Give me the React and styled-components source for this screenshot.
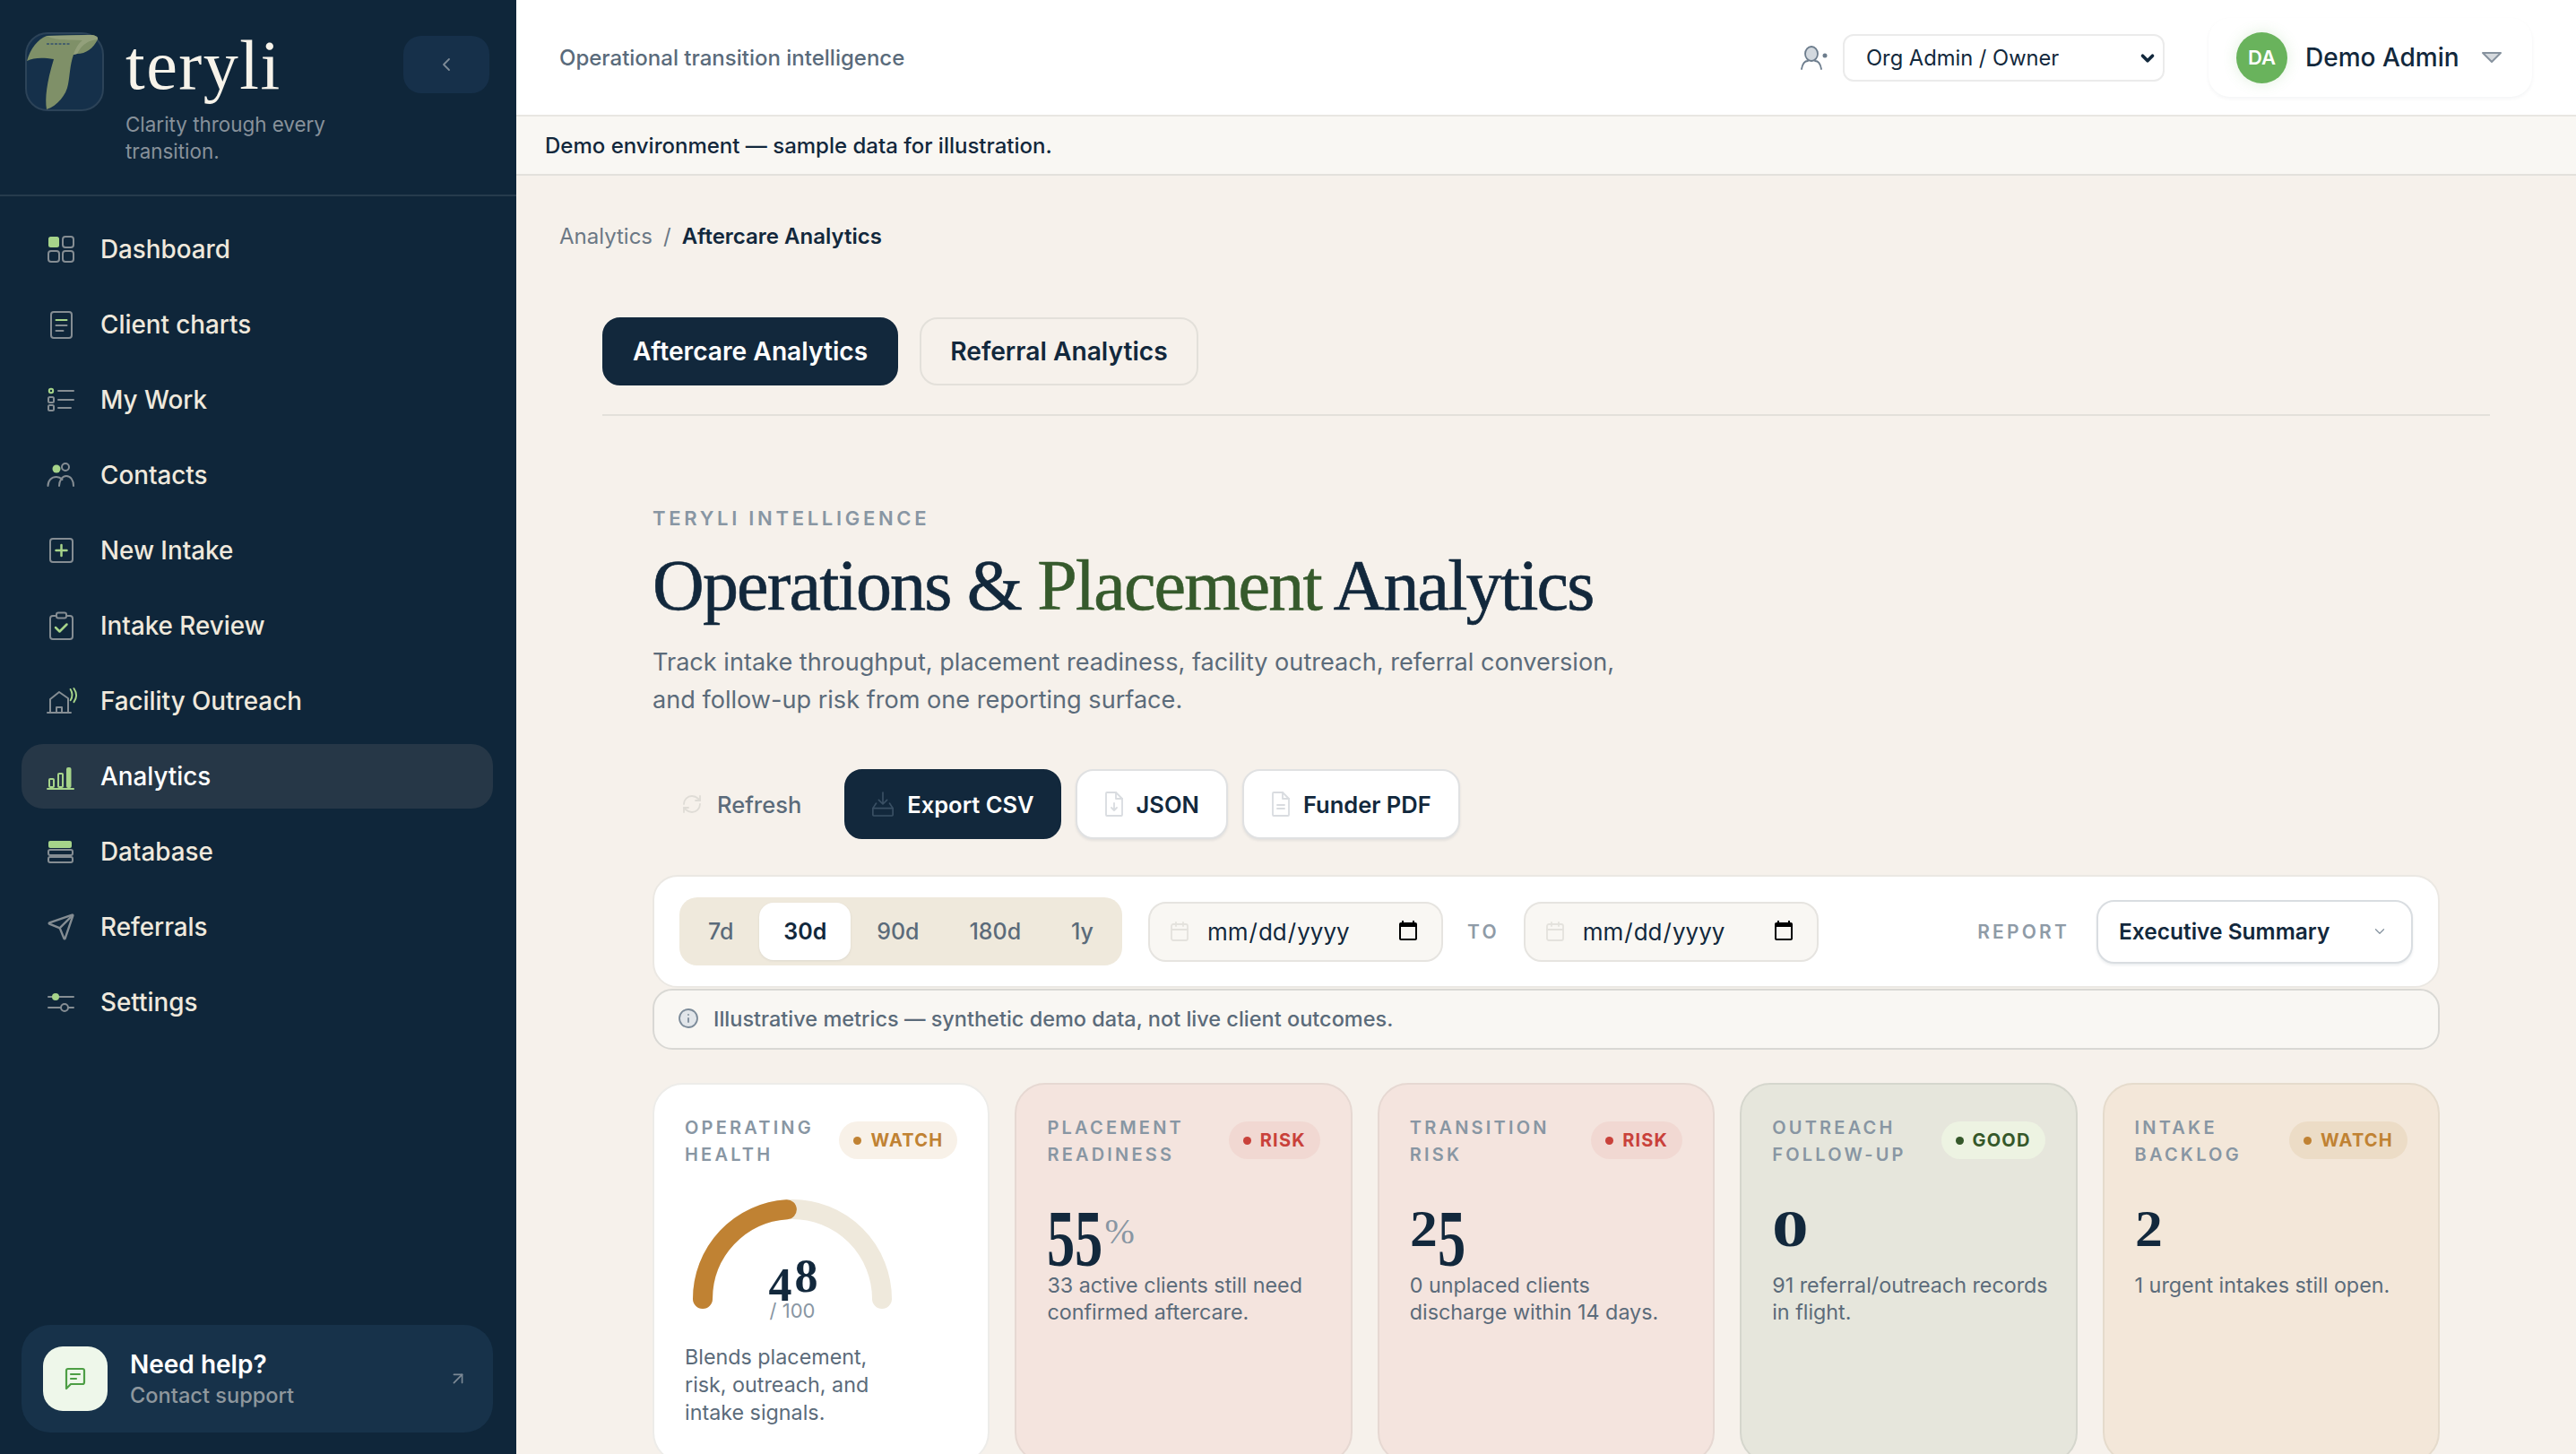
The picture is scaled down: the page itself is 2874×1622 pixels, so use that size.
import React from "react";
import styled, { createGlobalStyle } from "styled-components";
import { ChevronLeft, ChevronDown, Info, ArrowUpRight, Send, Calendar, RefreshCw } from "lucide-react";

const GREEN = "#a6d48a";
const GRAY = "#858d93";

const GlobalStyle = createGlobalStyle`
  html, body {
    margin: 0;
    height: 100%;
    overflow: hidden;
    background: #f6f1eb;
    font-family: Inter, "Liberation Sans", sans-serif;
    color: #12283c;
  }
  * { box-sizing: border-box; }
`;

const Page = styled.div`
  display: flex;
  height: 100vh;
  overflow: hidden;
`;

const Sidebar = styled.aside`
  width: 576px;
  flex-shrink: 0;
  background: #0f263a;
  display: flex;
  flex-direction: column;
  padding-bottom: 24px;
`;

const Brand = styled.div`
  height: 219px;
  padding: 36px 30px 0 28px;
  border-bottom: 2px solid #263b4d;
  display: flex;
  align-items: flex-start;
  gap: 24px;
`;

const BrandText = styled.div`
  flex: 1;
`;

const Wordmark = styled.div`
  font-family: "Liberation Serif", serif;
  font-size: 78px;
  line-height: 76px;
  letter-spacing: 1.5px;
  color: #f7f3ea;
  margin-top: -1px;
`;

const Tagline = styled.div`
  font-size: 22.4px;
  line-height: 30px;
  color: #87919a;
  width: 250px;
  margin-top: 13px;
`;

const CollapseButton = styled.button`
  width: 96px;
  height: 64px;
  margin-top: 4px;
  border: none;
  border-radius: 20px;
  background: #16304a;
  color: #7e8b97;
  display: flex;
  align-items: center;
  justify-content: center;
`;

const Nav = styled.nav`
  display: flex;
  flex-direction: column;
  gap: 12px;
  padding: 23px 26px 0 24px;
`;

const NavItem = styled.a`
  height: 72px;
  border-radius: 24px;
  padding-left: 28px;
  display: flex;
  align-items: center;
  gap: 28px;
  font-size: 27.8px;
  font-weight: 500;
  color: ${(p) => (p.$active ? "#ffffff" : "#efe9dd")};
  background: ${(p) => (p.$active ? "#263747" : "transparent")};
`;

const NavIcon = styled.span`
  width: 32px;
  height: 32px;
  flex-shrink: 0;
  display: block;

  svg {
    display: block;
    overflow: visible;
  }
`;

const HelpCard = styled.div`
  margin: auto 26px 0 24px;
  height: 120px;
  border-radius: 32px;
  background: #17324a;
  display: flex;
  align-items: center;
  padding: 0 28px 0 24px;
  gap: 25px;
`;

const HelpIcon = styled.div`
  width: 72px;
  height: 72px;
  border-radius: 22px;
  background: #eef7ea;
  display: flex;
  align-items: center;
  justify-content: center;
`;

const HelpText = styled.div`
  flex: 1;
  padding-top: 2px;
`;

const HelpTitle = styled.div`
  font-size: 28px;
  line-height: 36px;
  font-weight: 600;
  color: #ffffff;
`;

const HelpSub = styled.div`
  font-size: 23.6px;
  line-height: 34px;
  font-weight: 500;
  color: #8e979d;
`;

const Main = styled.main`
  flex: 1;
  min-width: 0;
  display: flex;
  flex-direction: column;
`;

const Header = styled.header`
  height: 130px;
  flex-shrink: 0;
  background: #ffffff;
  border-bottom: 2px solid #e8e6e2;
  padding: 0 49px 0 48px;
  display: flex;
  align-items: center;
  justify-content: space-between;
`;

const HeaderTitle = styled.div`
  font-size: 24px;
  font-weight: 500;
  color: #5a6b7b;
`;

const HeaderRight = styled.div`
  display: flex;
  align-items: center;
`;

const RoleSelectWrap = styled.div`
  position: relative;
  margin-left: 16px;
  margin-right: 49px;

  svg {
    position: absolute;
    right: 8px;
    top: 16px;
    color: #12283c;
    pointer-events: none;
  }
`;

const RoleSelect = styled.select`
  appearance: none;
  display: block;
  width: 359px;
  height: 53px;
  border: 2px solid #ebebeb;
  border-radius: 12px;
  background: #ffffff;
  padding-left: 24px;
  font: 400 23.7px Inter, sans-serif;
  color: #12283c;
`;

const UserChip = styled.div`
  width: 361px;
  height: 88px;
  border-radius: 24px;
  background: #ffffff;
  box-shadow: 0 2px 4px rgba(18, 40, 60, 0.05);
  padding-left: 31px;
  display: flex;
  align-items: center;
`;

const Avatar = styled.div`
  width: 57px;
  height: 57px;
  border-radius: 50%;
  background: #69b35c;
  color: #ffffff;
  font-size: 22px;
  font-weight: 600;
  display: flex;
  align-items: center;
  justify-content: center;
  box-shadow: 0 0 16px rgba(105, 179, 92, 0.2);
`;

const UserName = styled.div`
  font-size: 28px;
  font-weight: 500;
  margin: 0 24px 0 20px;
`;

const Banner = styled.div`
  height: 66px;
  flex-shrink: 0;
  background: #f9f7f3;
  border-bottom: 2px solid #e3e1dc;
  padding-left: 32px;
  display: flex;
  align-items: center;
  font-size: 24px;
  font-weight: 500;
  color: #12283c;
`;

const Content = styled.div`
  flex: 1;
  overflow: hidden;
  padding: 51px 96px 0 48px;
`;

const Crumbs = styled.div`
  font-size: 24px;
  line-height: 34px;
  color: #6b7885;
  display: flex;
  gap: 12px;
`;

const CrumbCurrent = styled.span`
  color: #12283c;
  font-weight: 600;
`;

const Tabs = styled.div`
  margin: 73px 0 0 48px;
  padding-bottom: 32px;
  border-bottom: 2px solid #e3e0da;
  display: flex;
  gap: 24px;
`;

const Tab = styled.button`
  height: 76px;
  padding: 0 32px;
  border-radius: 20px;
  border: 2px solid ${(p) => (p.$active ? "#12283c" : "#e3e0da")};
  background: ${(p) => (p.$active ? "#12283c" : "transparent")};
  color: ${(p) => (p.$active ? "#ffffff" : "#12283c")};
  font: 600 28.2px Inter, sans-serif;
`;

const Section = styled.section`
  margin-left: 48px;
  padding: 0 56px;
`;

const Eyebrow = styled.div`
  margin-top: 99px;
  font-size: 22px;
  line-height: 30px;
  font-weight: 600;
  letter-spacing: 3.7px;
  color: #8896a3;
`;

const Title = styled.h1`
  margin: 16px 0 0;
  font-family: "Liberation Serif", serif;
  font-size: 80px;
  line-height: 88px;
  font-weight: 400;
  letter-spacing: -1.85px;
  -webkit-text-stroke: 0.6px currentColor;
  color: #12283c;
  white-space: nowrap;
`;

const TitleAccent = styled.span`
  color: #365a2c;
`;

const Subtitle = styled.p`
  margin: 21px 0 0;
  max-width: 1100px;
  font-size: 27.1px;
  line-height: 42px;
  color: #5b6b7a;
`;

const Actions = styled.div`
  margin-top: 56px;
  display: flex;
  gap: 16px;
`;

const ActionButton = styled.button`
  height: 78px;
  padding: 0 ${(p) => (p.$kind === "primary" ? 28 : 30)}px;
  border-radius: 20px;
  display: flex;
  align-items: center;
  gap: ${(p) => (p.$kind === "ghost" ? 16 : 14)}px;
  font: 600 25.5px Inter, sans-serif;
  border: 2px solid transparent;
  ${(p) =>
    p.$kind === "primary" &&
    "background:#12283c;color:#fff;border-color:#12283c;"}
  ${(p) =>
    p.$kind === "ghost" &&
    "background:transparent;color:#5b6b7a;font-weight:500;"}
  ${(p) =>
    p.$kind === "outline" &&
    "background:#fff;color:#12283c;border-color:#e0e1e2;box-shadow:0 2px 3px rgba(18,40,60,.08);"}
`;

const FilterCard = styled.div`
  margin-top: 40px;
  height: 126px;
  background: #ffffff;
  border: 2px solid #ebe8e3;
  border-radius: 28px;
  padding: 0 28px;
  display: flex;
  align-items: center;
`;

const Segments = styled.div`
  width: 494px;
  height: 76px;
  border-radius: 20px;
  background: #efe9dc;
  padding: 5px;
  display: flex;
  justify-content: space-between;
  align-items: center;
`;

const Segment = styled.button`
  height: 64px;
  border: none;
  border-radius: 16px;
  padding: 0 27px;
  font: ${(p) => (p.$active ? 600 : 500)} 25px Inter, sans-serif;
  color: ${(p) => (p.$active ? "#12283c" : "#5b6b7a")};
  background: ${(p) => (p.$active ? "#ffffff" : "transparent")};
  box-shadow: ${(p) => (p.$active ? "0 1px 3px rgba(18,40,60,.08)" : "none")};
`;

const DateField = styled.label`
  width: 329px;
  height: 67px;
  margin-left: ${(p) => p.$ml}px;
  border: 2px solid #e6e4e0;
  border-radius: 20px;
  background: #f9f7f3;
  padding: 0 24px 0 21px;
  display: flex;
  align-items: center;
  gap: 18px;
  color: #e4e2dd;
  flex-shrink: 0;
`;

const DateInput = styled.input`
  flex: 1;
  min-width: 0;
  border: none;
  outline: none;
  background: transparent;
  font: 400 26px Inter, sans-serif;
  color: #12283c;
  padding: 0;

  &::-webkit-calendar-picker-indicator {
    width: 26px;
    height: 26px;
    padding: 0;
    margin: 0;
    opacity: 1;
  }
`;

const SmallCaps = styled.span`
  font-size: 21px;
  font-weight: 600;
  letter-spacing: 3.2px;
  color: #8f9ba7;
`;

const ToLabel = styled(SmallCaps)`
  margin-left: 27px;
  margin-right: 27px;
`;

const ReportLabel = styled(SmallCaps)`
  margin-left: auto;
  margin-right: 30px;
`;

const ReportSelect = styled.div`
  width: 353px;
  height: 71px;
  border: 2px solid #d9dde1;
  border-radius: 20px;
  background: #ffffff;
  box-shadow: 0 2px 3px rgba(18, 40, 60, 0.08);
  padding: 0 26px 0 23px;
  display: flex;
  align-items: center;
  justify-content: space-between;
  font-size: 24.5px;
  font-weight: 600;
  color: #8a97a3;
  flex-shrink: 0;
`;

const ReportValue = styled.span`
  color: #12283c;
`;

const Notice = styled.div`
  margin-top: 1px;
  height: 68px;
  background: #f9f7f3;
  border: 2px solid #d9d8d4;
  border-radius: 22px;
  padding: 0 0 2px 26px;
  display: flex;
  align-items: center;
  gap: 16px;
  font-size: 23.5px;
  font-weight: 500;
  color: #5b6b7a;

  svg {
    color: #7c8b99;
    fill: #e2e6ea;
  }
`;

const Metrics = styled.div`
  margin-top: 37px;
  display: grid;
  grid-template-columns: repeat(5, minmax(0, 1fr));
  gap: 28px;
`;

const CARD_TONES = {
  neutral: { bg: "#ffffff", border: "#edece9" },
  risk: { bg: "#f4e4de", border: "#e6d8d2" },
  good: { bg: "#e6e6dc", border: "#d5d6cd" },
  watch: { bg: "#f3e7d9", border: "#e5dbcc" },
};

const Card = styled.article`
  height: 424px;
  padding: 33px 34px 0 34px;
  border-radius: 34px;
  background: ${(p) => CARD_TONES[p.$tone].bg};
  border: 2px solid ${(p) => CARD_TONES[p.$tone].border};
`;

const CardHead = styled.div`
  display: flex;
  align-items: flex-start;
  justify-content: space-between;
`;

const CardLabel = styled.div`
  font-size: 20px;
  line-height: 30px;
  font-weight: 600;
  letter-spacing: 3.2px;
  color: #8896a3;
`;

const BADGES = {
  "watch-light": { bg: "#f8f1e8", fg: "#c08233" },
  "watch-dark": { bg: "#ecdcc6", fg: "#c08233" },
  risk: { bg: "#f1d8d2", fg: "#c9413a" },
  good: { bg: "#edf3e2", fg: "#35582a" },
};

const Badge = styled.span`
  height: 42px;
  margin-top: 8px;
  padding: 0 16px;
  border-radius: 21px;
  display: inline-flex;
  align-items: center;
  gap: 10px;
  font-size: 20px;
  font-weight: 700;
  letter-spacing: 1.2px;
  background: ${(p) => BADGES[p.$tone].bg};
  color: ${(p) => BADGES[p.$tone].fg};

  &::before {
    content: "";
    width: 9px;
    height: 9px;
    border-radius: 50%;
    background: currentColor;
  }
`;

const Gauge = styled.div`
  position: relative;
  width: 222px;
  height: 160px;
  margin: 35px 0 0 9px;
`;

const GaugeScore = styled.div`
  position: absolute;
  top: 60px;
  left: 0;
  right: 0;
  text-align: center;
  font-family: "Liberation Serif", serif;
  font-size: 52px;
  line-height: 52px;
`;

const GaugeMax = styled.div`
  position: absolute;
  top: 112px;
  left: 0;
  right: 0;
  text-align: center;
  font-size: 22px;
  line-height: 24px;
  color: #8896a3;
`;

const Value = styled.div`
  height: 76px;
  margin-top: 40px;
  font-family: "Liberation Serif", serif;
  font-size: 56px;
  line-height: 56px;
  color: #12283c;
  white-space: nowrap;
`;

const Digit = styled.span`
  display: inline-block;
  width: ${(p) => p.$w}px;
  font-size: ${(p) => p.$size}px;
  font-weight: 700;
  line-height: 0;
  vertical-align: ${(p) => p.$drop}px;
  transform: scaleX(${(p) => p.$sx});
  transform-origin: left center;
`;

const Percent = styled.span`
  display: inline-block;
  font-size: 40px;
  line-height: 0;
  vertical-align: 3px;
  color: #8896a3;
  margin-left: 2px;
`;

const CardText = styled.p`
  margin: 0;
  font-size: 23.3px;
  line-height: 30px;
  color: #5b6b7a;
  white-space: nowrap;
`;

const GaugeText = styled(CardText)`
  line-height: 31px;
`;

const DIGIT_SHAPES = {
  0: { $size: 56, $w: 39, $sx: 1.45, $drop: 0 },
  2: { $size: 56, $w: 31, $sx: 1.1, $drop: 0 },
  5: { $size: 88, $w: 31, $sx: 0.71, $drop: -21 },
  4: { $size: 52, $w: 31, $sx: 1, $drop: -10 },
  8: { $size: 52, $w: 27, $sx: 1, $drop: 0 },
};

function OldStyle({ value }) {
  return String(value)
    .split("")
    .map((d, i) => (
      <Digit key={i} {...DIGIT_SHAPES[d]}>
        {d}
      </Digit>
    ));
}

const Icon = ({ children, w = 32, h = 32 }) => (
  <svg width={w} height={h} viewBox={`0 0 ${w} ${h}`} fill="none" stroke={GRAY} strokeWidth="2" strokeLinecap="round" strokeLinejoin="round">
    {children}
  </svg>
);

const NAV = [
  {
    label: "Dashboard",
    icon: (
      <Icon>
        <rect x="2" y="2" width="12" height="12" rx="2.5" fill={GREEN} stroke="none" />
        <rect x="18" y="2" width="12" height="12" rx="3" />
        <rect x="2" y="18" width="12" height="12" rx="3" />
        <rect x="18" y="18" width="12" height="12" rx="3" />
      </Icon>
    ),
  },
  {
    label: "Client charts",
    icon: (
      <Icon>
        <rect x="5" y="2" width="23" height="29" rx="3" />
        <path d="M10.5 11h12" stroke={GREEN} />
        <path d="M10.5 17h12M10.5 23h8" />
      </Icon>
    ),
  },
  {
    label: "My Work",
    icon: (
      <Icon>
        <circle cx="5" cy="6" r="2.2" stroke={GREEN} />
        <rect x="2" y="13" width="6" height="6" rx="1.5" />
        <rect x="2" y="22" width="6" height="6" rx="1.5" />
        <path d="M13 6h17M13 16h17M13 25h14" />
      </Icon>
    ),
  },
  {
    label: "Contacts",
    icon: (
      <Icon>
        <circle cx="11" cy="9" r="4.5" fill={GREEN} stroke="none" />
        <circle cx="21" cy="7" r="4" />
        <path d="M1.5 28c0-6 4-10 9.5-10 3.5 0 5 1.5 6.5 3M14 28c0-5 3-11 8-11s8 5 8 11" />
      </Icon>
    ),
  },
  {
    label: "New Intake",
    icon: (
      <Icon>
        <rect x="4" y="3" width="25" height="26" rx="3" />
        <path d="M16.5 10v12M10.5 16h12" stroke={GREEN} strokeWidth="2.5" />
      </Icon>
    ),
  },
  {
    label: "Intake Review",
    icon: (
      <Icon>
        <rect x="4" y="5" width="25" height="26" rx="3" />
        <rect x="11" y="1.5" width="11" height="6" rx="2" fill="#0f263a" />
        <path d="M10 18l4.5 4.5 8-8" stroke={GREEN} strokeWidth="2.5" />
      </Icon>
    ),
  },
  {
    label: "Facility Outreach",
    icon: (
      <Icon>
        <path d="M4 28V14L14 6l10 7v15M1 29h26" />
        <path d="M11 29v-6h6v6" />
        <path d="M28 2c2.5 4 2.5 9 0 13M32 1c3.5 5 3.5 11 0 16" stroke={GREEN} transform="translate(0 1) scale(.95)" />
      </Icon>
    ),
  },
  {
    label: "Analytics",
    active: true,
    icon: (
      <Icon>
        <g stroke={GREEN}>
          <rect x="3" y="19" width="5" height="9" rx="1" />
          <rect x="13" y="13" width="5" height="15" rx="1" />
          <rect x="23" y="7" width="3.5" height="21" rx="1" fill={GREEN} />
          <path d="M1 30h29" />
        </g>
      </Icon>
    ),
  },
  {
    label: "Database",
    icon: (
      <Icon>
        <rect x="2" y="4" width="26" height="8" rx="2" fill={GREEN} stroke="none" />
        <rect x="2" y="14" width="27" height="6" rx="2" />
        <rect x="2" y="22" width="27" height="6" rx="2" />
      </Icon>
    ),
  },
  { label: "Referrals", icon: <Send size={32} color={GRAY} strokeWidth={1.8} /> },
  {
    label: "Settings",
    icon: (
      <Icon>
        <path d="M2 10h28M2 22h28" />
        <circle cx="10" cy="10" r="4" fill={GREEN} stroke="none" />
        <circle cx="20" cy="22" r="4" fill="#0f263a" />
      </Icon>
    ),
  },
];

const METRICS = [
  { label: ["PLACEMENT", "READINESS"], tone: "risk", badge: "RISK", badgeTone: "risk", value: "55", percent: true, text: ["33 active clients still need", "confirmed aftercare."] },
  { label: ["TRANSITION", "RISK"], tone: "risk", badge: "RISK", badgeTone: "risk", value: "25", text: ["0 unplaced clients", "discharge within 14 days."] },
  { label: ["OUTREACH", "FOLLOW-UP"], tone: "good", badge: "GOOD", badgeTone: "good", value: "0", text: ["91 referral/outreach records", "in flight."] },
  { label: ["INTAKE", "BACKLOG"], tone: "watch", badge: "WATCH", badgeTone: "watch-dark", value: "2", text: ["1 urgent intakes still open."] },
];

function Logo() {
  return (
    <svg width="88" height="88" viewBox="0 0 88 88" style={{ flexShrink: 0 }}>
      <rect x="1" y="1" width="86" height="86" rx="24" fill="#15304a" stroke="#2c4358" strokeWidth="2" />
      <path d="M2 32C6 18 14 8 24 4L72 3C78 3 82 5 81 8C76 18 68 24 58 24L54 25C50 36 50 48 48 58C46 70 36 82 24 86C22 74 24 56 32 30C20 28 10 28 2 32Z" fill="#7f9068" />
      <path d="M24 4L72 3C78 3 82 5 81 8C72 9 64 12 58 24L54 25C56 18 60 12 64 9C50 8 36 10 24 4Z" fill="#93a07b" />
      <path d="M24 13H50" stroke="#34506e" strokeWidth="1.5" strokeDasharray="3 1.5" />
    </svg>
  );
}

function ExportIcon() {
  return (
    <svg width="26" height="32" viewBox="0 0 28 32" fill="none" stroke="#3a5064" strokeWidth="1.8" strokeLinecap="round" strokeLinejoin="round">
      <path d="M14 2v14M9 11l5 5 5-5" />
      <path d="M6 15l-4 6v8a1 1 0 001 1h22a1 1 0 001-1v-8l-4-6" />
      <path d="M2 21h24" />
    </svg>
  );
}

function FileIcon({ kind }) {
  return (
    <svg width="22" height="30" viewBox="0 0 22 30" fill="none" stroke="#d9dce0" strokeWidth="1.8" strokeLinecap="round" strokeLinejoin="round">
      <path d="M2 3a1 1 0 011-1h10l7 7v18a1 1 0 01-1 1H3a1 1 0 01-1-1z" />
      <path d="M13 2v7h7" />
      {kind === "down" ? <path d="M11 14v8M8 19l3 3 3-3" /> : <path d="M7 16h8M7 20h8" />}
    </svg>
  );
}

function App() {
  return (
    <Page>
      <GlobalStyle />
      <Sidebar>
        <Brand>
          <Logo />
          <BrandText>
            <Wordmark>teryli</Wordmark>
            <Tagline>Clarity through every transition.</Tagline>
          </BrandText>
          <CollapseButton>
            <ChevronLeft size={24} strokeWidth={1.8} />
          </CollapseButton>
        </Brand>
        <Nav>
          {NAV.map((item) => (
            <NavItem key={item.label} $active={item.active}>
              <NavIcon>{item.icon}</NavIcon>
              {item.label}
            </NavItem>
          ))}
        </Nav>
        <HelpCard>
          <HelpIcon>
            <svg width="24" height="26" viewBox="0 0 24 26" fill="none" stroke="#4d9e45" strokeWidth="2.2" strokeLinecap="round" strokeLinejoin="round">
              <path d="M2 24V4a2 2 0 012-2h16a2 2 0 012 2v13a2 2 0 01-2 2H7z" />
              <path d="M7 8h10M7 13h6" />
            </svg>
          </HelpIcon>
          <HelpText>
            <HelpTitle>Need help?</HelpTitle>
            <HelpSub>Contact support</HelpSub>
          </HelpText>
          <ArrowUpRight size={22} color="#7c8995" strokeWidth={1.8} />
        </HelpCard>
      </Sidebar>
      <Main>
        <Header>
          <HeaderTitle>Operational transition intelligence</HeaderTitle>
          <HeaderRight>
            <svg width="32" height="28" viewBox="0 0 32 28" fill="none" stroke="#6d7d8d" strokeWidth="1.8" strokeLinecap="round">
              <ellipse cx="13" cy="10" rx="7" ry="8" fill="#d3d9df" />
              <path d="M2 27c1-6 4-9 7-9M24 27c-1-6-4-9-7-9" />
              <circle cx="28" cy="12" r="2.5" fill="#6d7d8d" stroke="none" />
            </svg>
            <RoleSelectWrap>
              <RoleSelect defaultValue="owner">
                <option value="owner">Org Admin / Owner</option>
              </RoleSelect>
              <ChevronDown size={22} strokeWidth={4} />
            </RoleSelectWrap>
            <UserChip>
              <Avatar>DA</Avatar>
              <UserName>Demo Admin</UserName>
              <svg width="24" height="14" viewBox="0 0 24 14" fill="#d6dade" stroke="#87939f" strokeWidth="2" strokeLinejoin="round">
                <path d="M2 2h20L12 12z" />
              </svg>
            </UserChip>
          </HeaderRight>
        </Header>
        <Banner>Demo environment — sample data for illustration.</Banner>
        <Content>
          <Crumbs>
            <span>Analytics</span>
            <span>/</span>
            <CrumbCurrent>Aftercare Analytics</CrumbCurrent>
          </Crumbs>
          <Tabs>
            <Tab $active>Aftercare Analytics</Tab>
            <Tab>Referral Analytics</Tab>
          </Tabs>
          <Section>
            <Eyebrow>TERYLI INTELLIGENCE</Eyebrow>
            <Title>
              Operations &amp; <TitleAccent>Placement</TitleAccent> Analytics
            </Title>
            <Subtitle>
              Track intake throughput, placement readiness, facility outreach, referral conversion, and follow-up risk from one reporting surface.
            </Subtitle>
            <Actions>
              <ActionButton $kind="ghost">
                <RefreshCw size={24} color="#dfdcd6" strokeWidth={1.8} />
                Refresh
              </ActionButton>
              <ActionButton $kind="primary">
                <ExportIcon />
                Export CSV
              </ActionButton>
              <ActionButton $kind="outline">
                <FileIcon kind="down" />
                JSON
              </ActionButton>
              <ActionButton $kind="outline">
                <FileIcon kind="lines" />
                Funder PDF
              </ActionButton>
            </Actions>
            <FilterCard>
              <Segments>
                <Segment>7d</Segment>
                <Segment $active>30d</Segment>
                <Segment>90d</Segment>
                <Segment>180d</Segment>
                <Segment>1y</Segment>
              </Segments>
              <DateField $ml={29}>
                <Calendar size={24} strokeWidth={1.8} />
                <DateInput type="date" />
              </DateField>
              <ToLabel>TO</ToLabel>
              <DateField $ml={0}>
                <Calendar size={24} strokeWidth={1.8} />
                <DateInput type="date" />
              </DateField>
              <ReportLabel>REPORT</ReportLabel>
              <ReportSelect>
                <ReportValue>Executive Summary</ReportValue>
                <ChevronDown size={18} strokeWidth={1.8} />
              </ReportSelect>
            </FilterCard>
            <Notice>
              <Info size={24} strokeWidth={1.8} />
              Illustrative metrics — synthetic demo data, not live client outcomes.
            </Notice>
            <Metrics>
              <Card $tone="neutral">
                <CardHead>
                  <CardLabel>
                    OPERATING
                    <br />
                    HEALTH
                  </CardLabel>
                  <Badge $tone="watch-light">WATCH</Badge>
                </CardHead>
                <Gauge>
                  <svg width="222" height="122" viewBox="0 0 222 122" fill="none" strokeWidth="22" strokeLinecap="round">
                    <path d="M11 111A100 100 0 0 1 211 111" stroke="#efe9dc" />
                    <path d="M11 111A100 100 0 0 1 211 111" stroke="#c08233" pathLength="100" strokeDasharray="48 100" />
                  </svg>
                  <GaugeScore>
                    <OldStyle value="48" />
                  </GaugeScore>
                  <GaugeMax>/ 100</GaugeMax>
                </Gauge>
                <GaugeText>
                  Blends placement,
                  <br />
                  risk, outreach, and
                  <br />
                  intake signals.
                </GaugeText>
              </Card>
              {METRICS.map((m) => (
                <Card key={m.label[0]} $tone={m.tone}>
                  <CardHead>
                    <CardLabel>
                      {m.label[0]}
                      <br />
                      {m.label[1]}
                    </CardLabel>
                    <Badge $tone={m.badgeTone}>{m.badge}</Badge>
                  </CardHead>
                  <Value>
                    <OldStyle value={m.value} />
                    {m.percent && <Percent>%</Percent>}
                  </Value>
                  <CardText>
                    {m.text.map((line) => (
                      <React.Fragment key={line}>
                        {line}
                        <br />
                      </React.Fragment>
                    ))}
                  </CardText>
                </Card>
              ))}
            </Metrics>
          </Section>
        </Content>
      </Main>
    </Page>
  );
}

export default App;
